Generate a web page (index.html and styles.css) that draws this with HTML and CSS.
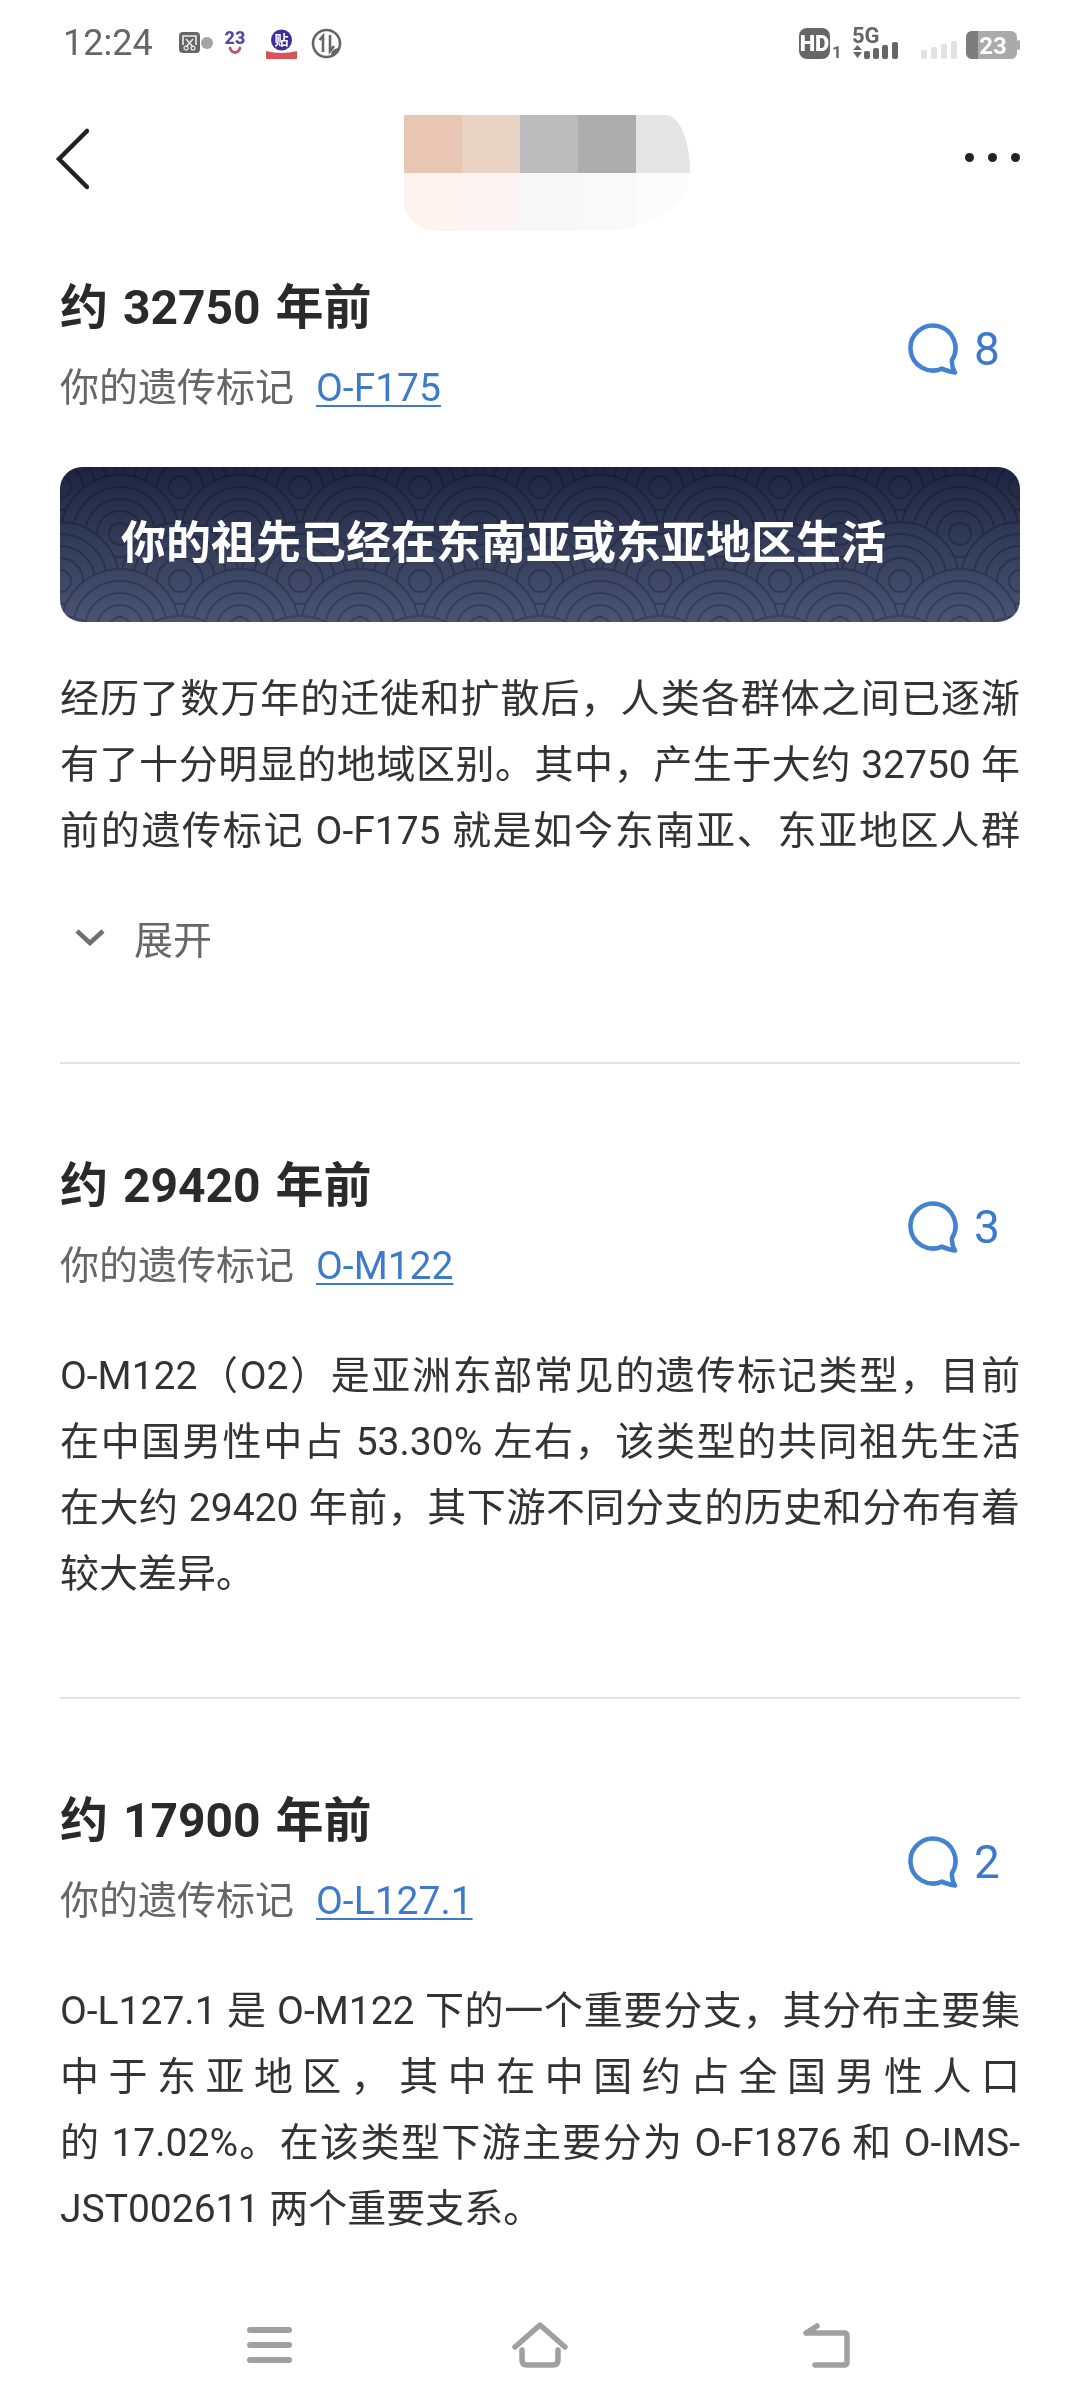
FILE: index.html
```html
<!DOCTYPE html>
<html lang="zh-CN">
<head>
<meta charset="utf-8">
<title>遗传标记</title>
<link rel="stylesheet" href="styles.css">
</head>
<body>
<div class="page">
  <header class="status">
    <div class="status-left">
      <span class="time">12:24</span>
      <svg class="ic-shot" viewBox="0 0 34 22" width="34" height="22">
        <rect x="0" y="0" width="21" height="21" rx="4" fill="#666"/>
        <path d="M4 13V4h13v9" fill="none" stroke="#eee" stroke-width="1.6"/>
        <path d="M7 7l7 8M14 7l-7 8" stroke="#eee" stroke-width="1.5"/>
        <circle cx="7" cy="16" r="2" fill="none" stroke="#eee" stroke-width="1.2"/>
        <circle cx="14" cy="16" r="2" fill="none" stroke="#eee" stroke-width="1.2"/>
        <circle cx="28" cy="11" r="6" fill="#a3a3a3"/>
      </svg>
      <svg class="ic-23" viewBox="0 0 24 28" width="24" height="28">
        <text x="12" y="15" class="t23" text-anchor="middle">23</text>
        <path d="M7 19c2 6 8 6 10 0" fill="none" stroke="#c2536d" stroke-width="2.8" stroke-linecap="round"/>
      </svg>
      <svg class="ic-tie" viewBox="0 0 31 31" width="31" height="31">
        <circle cx="15.500" cy="12" r="10.500" fill="#3c2f96"/>
        <text x="15.500" y="17" class="ttie" text-anchor="middle">贴</text>
        <path d="M0 23q15 4 31 0v7a1 1 0 0 1-1 1H1a1 1 0 0 1-1-1z" fill="#d9545a"/>
      </svg>
      <svg class="ic-data" viewBox="0 0 31 31" width="31" height="31">
        <circle cx="15.500" cy="15.500" r="13.500" fill="none" stroke="#666" stroke-width="2.600"/>
        <path d="M12 24V8l-3.500 4M19 7v16l4-5" fill="none" stroke="#666" stroke-width="2.600"/>
        <path d="M20 27c0-5 4-7 9-7-1 5-4 7-9 7z" fill="#666"/>
      </svg>
    </div>
    <div class="status-right">
      <svg class="ic-hd" viewBox="0 0 42 31" width="42" height="31">
        <rect x="0" y="0" width="31" height="31" rx="8" fill="#666"/>
        <text x="15.500" y="23" class="thd" text-anchor="middle">HD</text>
        <text x="38" y="30" class="tone" text-anchor="middle">1</text>
      </svg>
      <svg class="ic-5g" viewBox="0 0 48 32" width="48" height="32">
        <text x="0" y="16" class="t5g">5G</text>
        <path d="M1 23l4.500-5 4.500 5zM1 25l4.500 6 4.500-6z" fill="#666"/>
        <rect x="12" y="24" width="6" height="8" rx="2" fill="#666"/>
        <rect x="21" y="21" width="6" height="11" rx="2" fill="#666"/>
        <rect x="30" y="18" width="6" height="14" rx="2" fill="#666"/>
        <rect x="40" y="15" width="6" height="17" rx="2" fill="#666"/>
      </svg>
      <svg class="ic-sig" viewBox="0 0 36 18" width="36" height="18">
        <rect x="0" y="9" width="6" height="9" rx="2" fill="#e2e2e2"/>
        <rect x="10" y="6" width="6" height="12" rx="2" fill="#e2e2e2"/>
        <rect x="20" y="3" width="6" height="15" rx="2" fill="#e2e2e2"/>
        <rect x="30" y="0" width="6" height="18" rx="2" fill="#e2e2e2"/>
      </svg>
      <svg class="ic-bat" viewBox="0 0 54 28" width="54" height="28">
        <rect x="0" y="0" width="51" height="28" rx="6" fill="#aaa"/>
        <path d="M6 0h6v28H6a6 6 0 0 1-6-6V6a6 6 0 0 1 6-6z" fill="#7d7d7d"/>
        <rect x="51" y="9" width="3" height="10" rx="1.500" fill="#aaa"/>
        <text x="27" y="23" class="tbat" text-anchor="middle">23</text>
      </svg>
    </div>
  </header>

  <nav class="topnav">
    <svg class="back" viewBox="0 0 34 62" width="34" height="62">
      <path d="M32 3L4 31l28 28" fill="none" stroke="#222" stroke-width="4.500" stroke-linecap="round"/>
    </svg>
    <div class="mosaic">
      <i class="m1"></i><i class="m2"></i><i class="m3"></i><i class="m4"></i><i class="m5"></i>
      <i class="m6"></i><i class="m7"></i><i class="m8"></i><i class="m9"></i><i class="m10"></i>
    </div>
    <div class="dots"><i></i><i></i><i></i></div>
  </nav>

  <main class="content">
    <section class="block first">
      <div class="head">
        <div class="head-text">
          <h2 class="title">约 32750 年前</h2>
          <p class="sub">你的遗传标记<a class="link">O-F175</a></p>
        </div>
        <div class="comments">
          <svg class="bubble" viewBox="0 0 52 52" width="52" height="52"><path d="M34 45.600A22.500 22.500 0 1 1 44 37C43.500 41 44.500 45 47 49.500C42 48.500 38 47.500 34 45.600Z"/></svg>
          <span class="count">8</span>
        </div>
      </div>
      <div class="banner">
        <svg class="waves" width="960" height="155">
          <defs>
            <g id="ringset" class="rings">
              <circle r="59"/><circle r="47"/><circle r="35"/><circle r="23"/><circle r="11"/>
            </g>
            <pattern id="seigaiha" width="120" height="94" patternUnits="userSpaceOnUse" x="60" y="67">
              <rect width="120" height="94" fill="#fff"/>
              <use href="#ringset" x="0" y="0"/><use href="#ringset" x="120" y="0"/>
              <use href="#ringset" x="60" y="47"/>
              <use href="#ringset" x="0" y="94"/><use href="#ringset" x="120" y="94"/>
              <use href="#ringset" x="60" y="141"/>
            </pattern>
          </defs>
          <rect width="960" height="155" fill="url(#seigaiha)"/>
        </svg>
        <span class="banner-text">你的祖先已经在东南亚或东亚地区生活</span>
      </div>
      <p class="para">
        <span class="ln">经历了数万年的迁徙和扩散后，人类各群体之间已逐渐</span>
        <span class="ln">有了十分明显的地域区别。其中，产生于大约 32750 年</span>
        <span class="ln">前的遗传标记 O-F175 就是如今东南亚、东亚地区人群</span>
      </p>
      <div class="expand">
        <svg viewBox="0 0 30 18" width="30" height="18"><path d="M2 3l13 12L28 3" fill="none" stroke="#707070" stroke-width="4.500"/></svg>
        <span>展开</span>
      </div>
    </section>

    <section class="block">
      <div class="head">
        <div class="head-text">
          <h2 class="title">约 29420 年前</h2>
          <p class="sub">你的遗传标记<a class="link">O-M122</a></p>
        </div>
        <div class="comments">
          <svg class="bubble" viewBox="0 0 52 52" width="52" height="52"><path d="M34 45.600A22.500 22.500 0 1 1 44 37C43.500 41 44.500 45 47 49.500C42 48.500 38 47.500 34 45.600Z"/></svg>
          <span class="count">3</span>
        </div>
      </div>
      <p class="para">
        <span class="ln">O-M122（O2）是亚洲东部常见的遗传标记类型，目前</span>
        <span class="ln">在中国男性中占 53.30% 左右，该类型的共同祖先生活</span>
        <span class="ln">在大约 29420 年前，其下游不同分支的历史和分布有着</span>
        <span class="ln end">较大差异。</span>
      </p>
    </section>

    <section class="block last">
      <div class="head">
        <div class="head-text">
          <h2 class="title">约 17900 年前</h2>
          <p class="sub">你的遗传标记<a class="link">O-L127.1</a></p>
        </div>
        <div class="comments">
          <svg class="bubble" viewBox="0 0 52 52" width="52" height="52"><path d="M34 45.600A22.500 22.500 0 1 1 44 37C43.500 41 44.500 45 47 49.500C42 48.500 38 47.500 34 45.600Z"/></svg>
          <span class="count">2</span>
        </div>
      </div>
      <p class="para">
        <span class="ln">O-L127.1 是 O-M122 下的一个重要分支，其分布主要集</span>
        <span class="ln">中于东亚地区，其中在中国约占全国男性人口</span>
        <span class="ln">的 17.02%。在该类型下游主要分为 O-F1876 和 O-IMS-</span>
        <span class="ln end">JST002611 两个重要支系。</span>
      </p>
    </section>
  </main>

  <footer class="sysnav">
    <svg class="sys-menu" viewBox="0 0 45 38" width="45" height="38">
      <path d="M3 4h39M3 19h39M3 34h39" fill="none" stroke="#a0a0a0" stroke-width="6" stroke-linecap="round"/>
    </svg>
    <svg class="sys-home" viewBox="0 0 56 46" width="56" height="46">
      <path d="M3 25L28 3l25 22" fill="none" stroke="#a0a0a0" stroke-width="5.500" stroke-linecap="round" stroke-linejoin="round"/>
      <path d="M10 28v10q0 5 5 5h26q5 0 5-5V28" fill="none" stroke="#a0a0a0" stroke-width="5.500" stroke-linecap="round"/>
    </svg>
    <svg class="sys-back" viewBox="0 0 47 46" width="47" height="46">
      <path d="M3 11h38q3 0 3 3v26q0 3-3 3H12M3 11L14 4" fill="none" stroke="#a0a0a0" stroke-width="5.500" stroke-linecap="round" stroke-linejoin="round"/>
    </svg>
  </footer>
</div>
</body>
</html>
```

FILE: styles.css
```css
* { box-sizing: border-box; }
html, body { margin: 0; padding: 0; background: #fff; }
body { font-family: Roboto, "Noto Sans CJK SC", sans-serif; color: #333; }
.page { width: 1080px; height: 2408px; display: flex; flex-direction: column; overflow: hidden; background: #fff; }

/* status bar */
.status { height: 88px; padding: 27px 60px 0 63px; display: flex; justify-content: space-between; align-items: flex-start; flex: none; }
.status-left, .status-right { display: flex; align-items: center; height: 32px; }
.time { font-size: 36px; line-height: 34px; color: #666; width: 116px; }
.ic-23 { margin-left: 10px; }
.ic-tie { margin-left: 19px; }
.ic-data { margin-left: 14px; }
.ic-5g { margin-left: 11px; }
.ic-sig { margin-left: 21px; align-self: flex-end; }
.ic-bat { margin-left: 9px; align-self: flex-end; }
.status svg { overflow: visible; }
.t23 { font: 800 18px Roboto, sans-serif; fill: #4f4aa3; }
.ttie { font: 700 14px "Noto Sans CJK SC", sans-serif; fill: #fff; }
.thd { font: 900 22px Roboto, sans-serif; fill: #fff; }
.tone { font: 700 17px Roboto, sans-serif; fill: #666; }
.t5g { font: 700 22px Roboto, sans-serif; fill: #666; }
.tbat { font: 700 24px Roboto, sans-serif; fill: #fff; }

/* top nav */
.topnav { flex: none; height: 145px; padding: 27px 60px 0 55px; display: flex; justify-content: space-between; align-items: flex-start; }
.back { margin-top: 13px; }
.mosaic { width: 286px; height: 116px; margin-left: 40px; display: grid; grid-template-columns: 58px 58px 58px 58px 54px; grid-template-rows: 58px 58px; border-radius: 0 24px 90px 34px / 0 56px 58px 28px; overflow: hidden; }
.mosaic i { display: block; }
.m1 { background: #e9c6b4; }
.m2 { background: #e9d3c5; }
.m3 { background: #bcbcbc; }
.m4 { background: #adadad; }
.m5 { background: #e5e5e5; }
.m6 { background: #fdf4f0; }
.m7 { background: #fbf6f3; }
.m8 { background: #f8f8f8; }
.m9 { background: #f9f9f9; }
.m10 { background: #fcfcfc; }
.dots { display: flex; gap: 14px; margin-top: 38px; }
.dots i { width: 9px; height: 9px; border-radius: 50%; background: #222; }

/* content */
.content { flex: 1; min-height: 0; padding: 45px 60px 0; }
.block { padding: 92px 0 90px; border-bottom: 2px solid #e2e2e2; }
.block.first { padding: 0 0 95px; }
.block.last { border-bottom: 0; padding: 92px 0 0; }
.head { display: flex; justify-content: space-between; align-items: center; }
.title { margin: 0; font-size: 48px; line-height: 60px; font-weight: 700; color: #2a2a2a; word-spacing: 3px; }
.sub { margin: 20px 0 0; font-size: 39px; line-height: 60px; color: #666; }
.link { margin-left: 22px; color: #3d7acb; text-decoration: underline; text-decoration-thickness: 2px; text-underline-offset: 4px; }
.comments { display: flex; align-items: center; gap: 14px; width: 112px; margin-top: 2px; }
.bubble { fill: none; stroke: #4381d2; stroke-width: 4.500; stroke-linejoin: round; }
.count { font-size: 46px; line-height: 52px; color: #3d78cc; }

.banner { position: relative; margin-top: 49px; height: 155px; border-radius: 22px; overflow: hidden; background: linear-gradient(180deg, #1d2440 0%, #4a5573 100%); display: flex; align-items: center; padding-left: 61px; }
.waves { position: absolute; left: 0; top: 0; mix-blend-mode: multiply; }
.rings circle { fill: #fff; stroke: #c0c3cf; stroke-width: 2; }
.banner-text { position: relative; top: -1px; font-size: 45px; line-height: 60px; font-weight: 700; color: #fff; }

.para { margin: 47px 0 0; font-size: 39px; line-height: 66px; color: #333; }
.first .para { margin-top: 44px; }
.ln { display: block; text-align: justify; text-align-last: justify; white-space: nowrap; }
.ln.end { text-align-last: left; }

.expand { display: flex; align-items: center; gap: 29px; height: 60px; margin-top: 43px; padding-left: 15px; font-size: 39px; color: #666; }

/* system nav */
.sysnav { flex: none; height: 100px; padding: 0 0 26px 247px; display: flex; align-items: center; gap: 220px; }
.sys-back { margin-left: 15px; }
```
